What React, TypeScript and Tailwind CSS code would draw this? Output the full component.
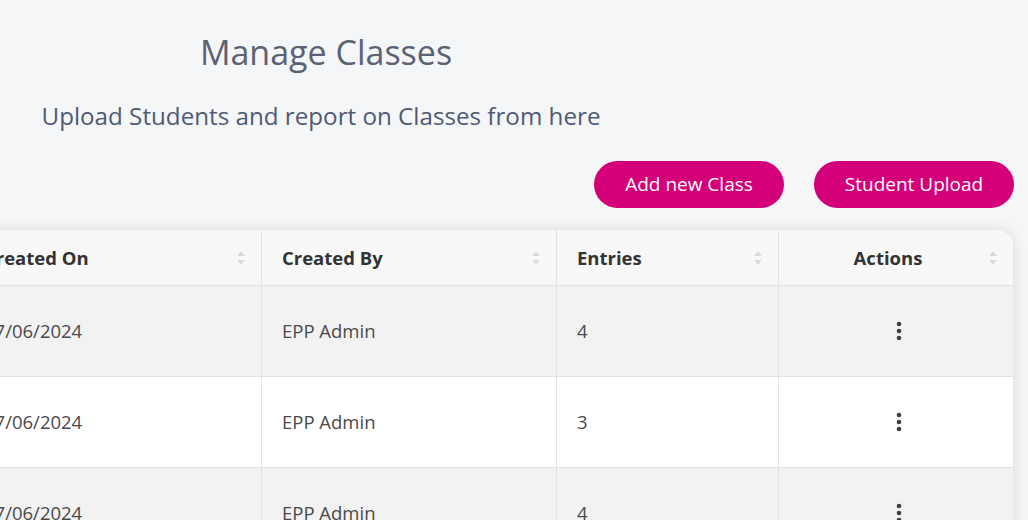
import React from "react";

const rows = [
  { date: "17/06/2024", by: "EPP Admin", entries: "4", bg: "bg-[#f2f2f2]" },
  { date: "17/06/2024", by: "EPP Admin", entries: "3", bg: "bg-white" },
  { date: "17/06/2024", by: "EPP Admin", entries: "4", bg: "bg-[#f2f2f2]" },
];

function SortIcon() {
  return (
    <svg width="8" height="16" viewBox="0 0 8 16" className="shrink-0">
      <path d="M4 1 L7.5 6 L0.5 6 Z" fill="#d9d9d9" />
      <path d="M4 15 L7.5 10 L0.5 10 Z" fill="#d9d9d9" />
    </svg>
  );
}

function Kebab() {
  return (
    <svg width="6" height="22" viewBox="0 0 6 22">
      <circle cx="3" cy="4" r="2.3" fill="#3f3f3f" />
      <circle cx="3" cy="11" r="2.3" fill="#3f3f3f" />
      <circle cx="3" cy="18" r="2.3" fill="#3f3f3f" />
    </svg>
  );
}

export default function App() {
  return (
    <div
      className="w-[1028px] h-[520px] overflow-hidden bg-[#f5f6f8]"
      style={{ fontFamily: '"Open Sans", "Noto Sans", sans-serif' }}
    >
      <div className="w-[652px] pt-[28px] text-center">
        <h1 className="text-[34px] leading-[48px] text-[#5a6274] font-normal">Manage Classes</h1>
        <p className="mt-[23px] pr-[10px] text-[24.2px] leading-[34px] font-medium text-[#4f5b73] whitespace-nowrap">
          Upload Students and report on Classes from here
        </p>
      </div>
      <div className="flex justify-end gap-[30px] pr-[14px] mt-[28px]">
        <button className="w-[190px] h-[47px] rounded-full bg-[#d4007a] text-white text-[19px]">
          Add new Class
        </button>
        <button className="w-[200px] h-[47px] rounded-full bg-[#d4007a] text-white text-[19px]">
          Student Upload
        </button>
      </div>
      <div className="mt-[22px] ml-[-43px] w-[1056px] rounded-tr-[16px] rounded-tl-[16px] overflow-hidden shadow-[0_0_14px_rgba(0,0,0,0.12)] bg-white">
        <div className="flex h-[56px] bg-[#f8f8f8] border-b border-[#e2e2e2] text-[18.5px] font-bold text-[#333333]">
          <div className="w-[305px] flex items-center justify-between pl-[27px] pr-[16px] border-r border-[#e2e2e2]">
            <span>Created On</span>
            <SortIcon />
          </div>
          <div className="w-[295px] flex items-center justify-between pl-[20px] pr-[16px] border-r border-[#e2e2e2]">
            <span>Created By</span>
            <SortIcon />
          </div>
          <div className="w-[222px] flex items-center justify-between pl-[20px] pr-[16px] border-r border-[#e2e2e2]">
            <span>Entries</span>
            <SortIcon />
          </div>
          <div className="w-[234px] flex items-center pl-[8px] pr-[16px]">
            <span className="flex-1 text-center">Actions</span>
            <SortIcon />
          </div>
        </div>
        {rows.map((r, i) => (
          <div key={i} className={`flex h-[91px] ${r.bg} border-b border-[#e2e2e2] text-[18.5px] text-[#4a4a4a]`}>
            <div className="w-[305px] flex items-center pl-[27px] border-r border-[#e2e2e2]">{r.date}</div>
            <div className="w-[295px] flex items-center pl-[20px] border-r border-[#e2e2e2]">{r.by}</div>
            <div className="w-[222px] flex items-center pl-[20px] border-r border-[#e2e2e2]">{r.entries}</div>
            <div className="w-[234px] flex items-center justify-center pl-[6px]">
              <Kebab />
            </div>
          </div>
        ))}
      </div>
    </div>
  );
}
